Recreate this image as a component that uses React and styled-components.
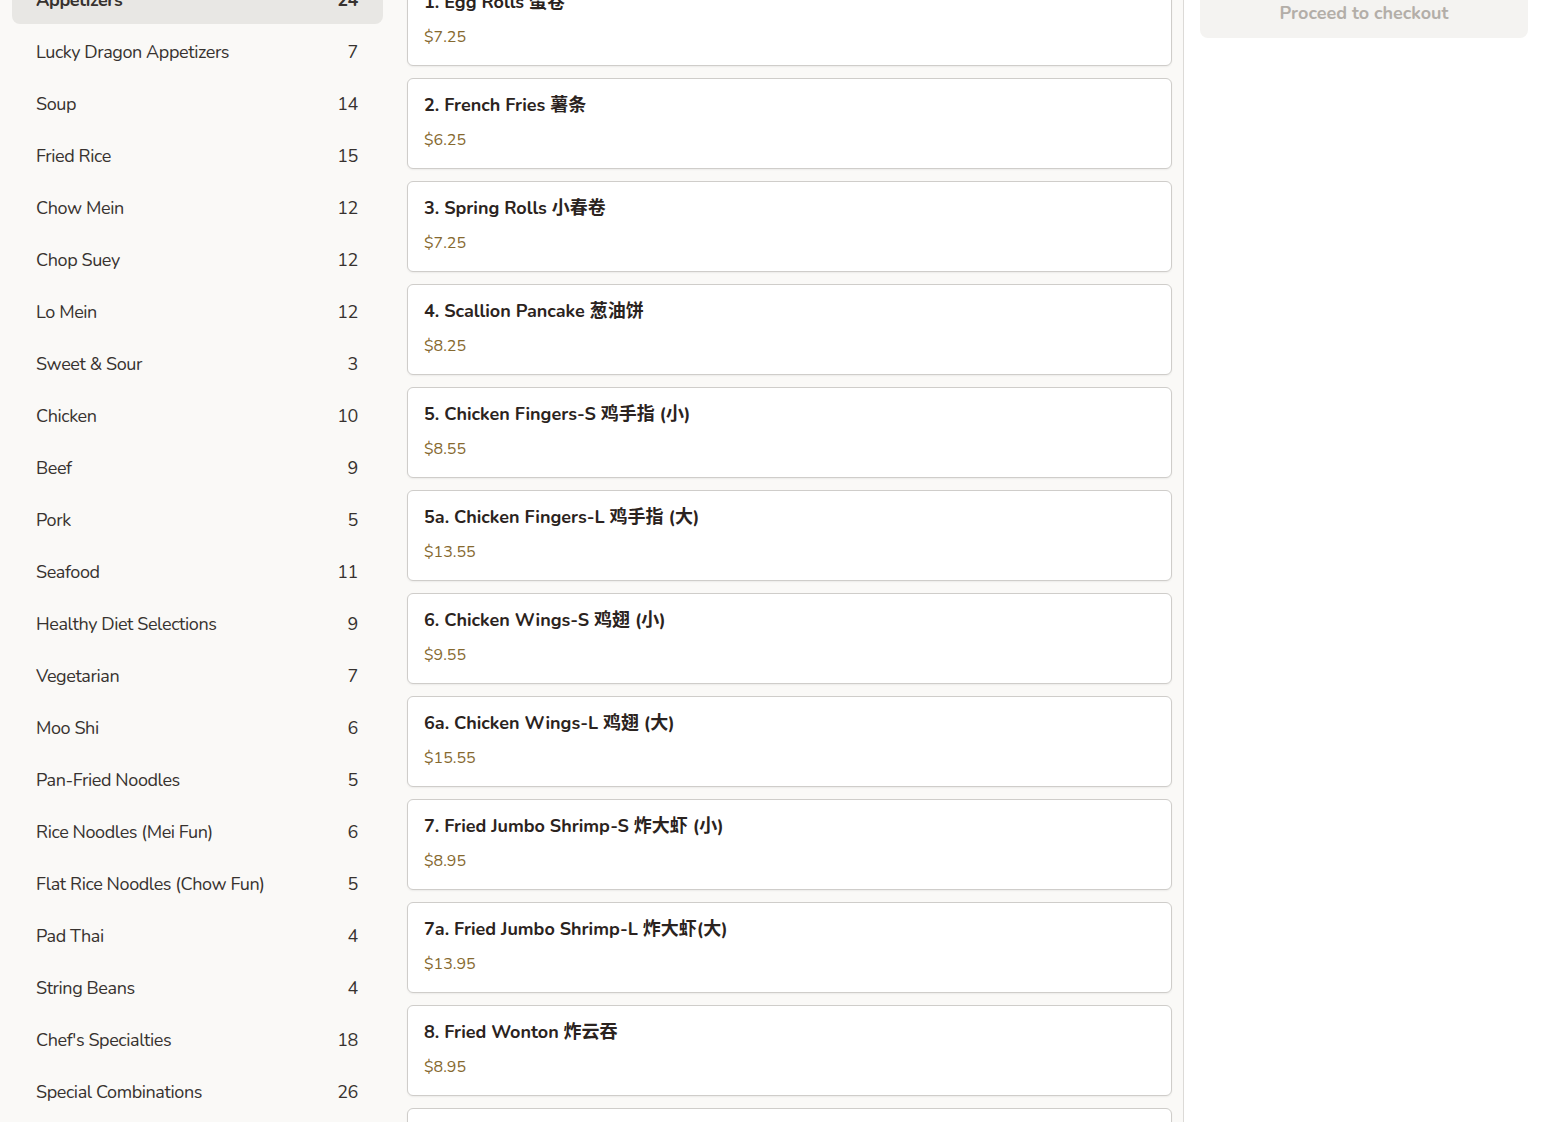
import React from 'react';
import styled, { createGlobalStyle } from 'styled-components';

const GlobalStyle = createGlobalStyle`
  html, body {
    margin: 0;
    padding: 0;
    background: #faf9f7;
    overflow: hidden;
  }
  body {
    font-family: 'Nunito', 'Lato', 'Noto Sans CJK SC', sans-serif;
    color: #2b2522;
  }
`;

const Layout = styled.div`
  display: grid;
  grid-template-columns: 395px 1fr 360px;
  margin-top: -36px;
  min-height: 1200px;
`;

const Sidebar = styled.nav`
  display: flex;
  flex-direction: column;
  gap: 4px;
  padding: 12px;
  background: #faf9f7;
`;

const CategoryItem = styled.div`
  display: flex;
  align-items: center;
  justify-content: space-between;
  height: 48px;
  padding: 0 25px 0 24px;
  border-radius: 8px;
  font-size: 18px;
  letter-spacing: -0.4px;
  font-weight: ${(p) => (p.$active ? 700 : 400)};
  color: #37322f;
  background: ${(p) => (p.$active ? '#e8e7e4' : 'transparent')};
`;

const Menu = styled.main`
  display: flex;
  flex-direction: column;
  gap: 12px;
  padding: 11px 11px 12px 12px;
  border-right: 1px solid #dcdad7;
`;

const Card = styled.div`
  display: flex;
  flex-direction: column;
  gap: 13px;
  padding: 15px 16px 17px;
  background: #ffffff;
  border: 1px solid #cfcdca;
  border-radius: 6px;
  box-shadow: 0 1px 2px rgba(0, 0, 0, 0.06);
`;

const ItemName = styled.div`
  font-size: 18px;
  line-height: 22px;
  font-weight: 700;
  color: #2b2320;
`;

const Price = styled.div`
  font-size: 16px;
  line-height: 22px;
  color: #86692f;
`;

const Cart = styled.aside`
  padding: 24px 16px 16px;
  background: #ffffff;
`;

const CheckoutButton = styled.button`
  width: 100%;
  height: 50px;
  border: none;
  border-radius: 8px;
  background: #f4f3f1;
  color: #b3aea8;
  font-family: inherit;
  font-size: 18px;
  font-weight: 700;
`;

const categories = [
  ['Appetizers', 24],
  ['Lucky Dragon Appetizers', 7],
  ['Soup', 14],
  ['Fried Rice', 15],
  ['Chow Mein', 12],
  ['Chop Suey', 12],
  ['Lo Mein', 12],
  ['Sweet & Sour', 3],
  ['Chicken', 10],
  ['Beef', 9],
  ['Pork', 5],
  ['Seafood', 11],
  ['Healthy Diet Selections', 9],
  ['Vegetarian', 7],
  ['Moo Shi', 6],
  ['Pan-Fried Noodles', 5],
  ['Rice Noodles (Mei Fun)', 6],
  ['Flat Rice Noodles (Chow Fun)', 5],
  ['Pad Thai', 4],
  ['String Beans', 4],
  ["Chef's Specialties", 18],
  ['Special Combinations', 26],
];

const items = [
  ['1. Egg Rolls 蛋卷', '$7.25'],
  ['2. French Fries 薯条', '$6.25'],
  ['3. Spring Rolls 小春卷', '$7.25'],
  ['4. Scallion Pancake 葱油饼', '$8.25'],
  ['5. Chicken Fingers-S 鸡手指 (小)', '$8.55'],
  ['5a. Chicken Fingers-L 鸡手指 (大)', '$13.55'],
  ['6. Chicken Wings-S 鸡翅 (小)', '$9.55'],
  ['6a. Chicken Wings-L 鸡翅 (大)', '$15.55'],
  ['7. Fried Jumbo Shrimp-S 炸大虾 (小)', '$8.95'],
  ['7a. Fried Jumbo Shrimp-L 炸大虾(大)', '$13.95'],
  ['8. Fried Wonton 炸云吞', '$8.95'],
  ['9. Boneless Spare Ribs 无骨排骨', '$10.95'],
];

const App = () => {
  return (
    <>
      <GlobalStyle />
      <Layout>
        <Sidebar>
          {categories.map(([name, count], i) => (
            <CategoryItem key={name} $active={i === 0}>
              <span>{name}</span>
              <span>{count}</span>
            </CategoryItem>
          ))}
        </Sidebar>
        <Menu>
          {items.map(([name, price]) => (
            <Card key={name}>
              <ItemName>{name}</ItemName>
              <Price>{price}</Price>
            </Card>
          ))}
        </Menu>
        <Cart>
          <CheckoutButton>Proceed to checkout</CheckoutButton>
        </Cart>
      </Layout>
    </>
  );
};

export default App;
